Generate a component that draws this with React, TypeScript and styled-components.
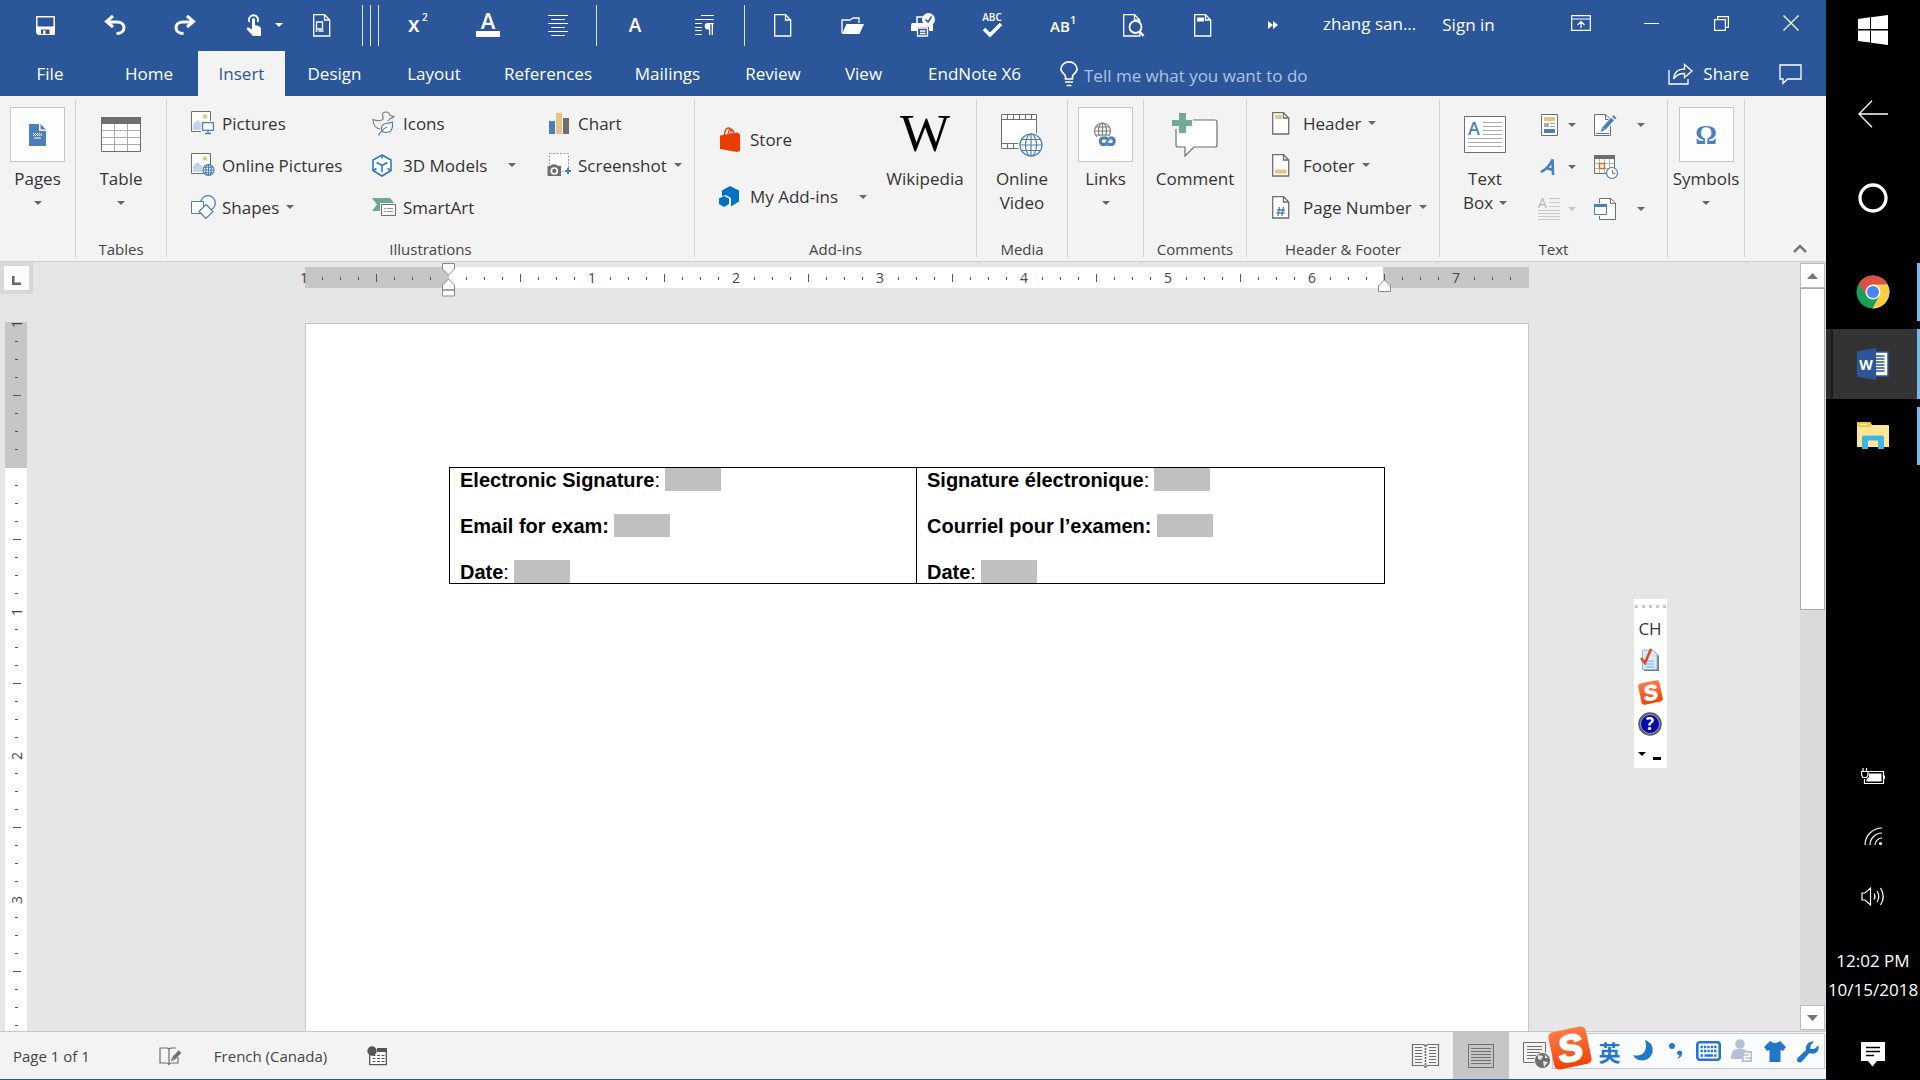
import React from "react";
import styled, { createGlobalStyle, css } from "styled-components";

const UI = `"Open Sans", "Noto Sans", "Noto Sans CJK SC", sans-serif`;
const BLUE = "#2b579a";
const ACCENT = "#4a7fb8";
const GREY = "#6e6e6e";
const SAND = "#eac282";

const GlobalStyle = createGlobalStyle`
  *, *::before, *::after { box-sizing: border-box; }
  body { margin: 0; background: #000; font-family: ${UI}; font-size: 17px; color: #333; overflow: hidden; }
  button { font: inherit; color: inherit; background: none; border: 0; padding: 0; margin: 0; cursor: default; }
  svg { display: block; flex: none; overflow: visible; }
`;

/* ---------- shell ---------- */
const Screen = styled.div`
  display: grid;
  grid-template-columns: minmax(0, 1fr) 94px;
  height: 100vh;
`;
const Window = styled.main`
  display: flex;
  flex-direction: column;
  min-width: 0;
  min-height: 0;
  background: #e6e6e6;
  border-bottom: 1px solid ${BLUE};
`;

/* ---------- title bar ---------- */
const TitleBar = styled.header`
  display: flex;
  height: 51px;
  padding-left: 10px;
  background: ${BLUE};
  color: #fff;
`;
const QuickButton = styled.button<{ $w?: number }>`
  display: flex;
  flex: none;
  align-items: center;
  justify-content: center;
  width: ${(p) => p.$w ?? 70}px;
  height: 50px;
`;
const TouchButton = styled(QuickButton)`
  justify-content: flex-end;
  gap: 14px;
  padding-right: 4px;
`;
const Bars = styled.span<{ $w: number }>`
  display: flex;
  flex: none;
  justify-content: center;
  gap: 7px;
  width: ${(p) => p.$w}px;
  padding-top: 5px;
`;
const Bar = styled.i`
  width: 1px;
  height: 41px;
  background: #dfe6f1;
`;
const TitleText = styled.span`
  flex: none;
  line-height: 48px;
  padding-left: 15px;
`;
const SignIn = styled.button`
  flex: none;
  height: 48px;
  padding: 0 26px;
`;
const WindowControls = styled.div`
  display: flex;
  margin-left: auto;
`;
const ControlButton = styled(QuickButton)`
  height: 46px;
`;

/* ---------- tabs ---------- */
const TabBar = styled.nav`
  display: flex;
  height: 45px;
  background: ${BLUE};
  color: #fff;
`;
const Tab = styled.button<{ $w: number; $active?: boolean }>`
  flex: none;
  width: ${(p) => p.$w}px;
  ${(p) => p.$active && css`background: #f3f3f3; color: ${BLUE};`}
`;
const TellMe = styled.label`
  display: flex;
  flex: 1;
  align-items: center;
  gap: 6px;
  padding-left: 15px;
`;
const TellInput = styled.input`
  width: 260px;
  padding: 3px 0 0;
  border: 0;
  background: none;
  outline: 0;
  font: inherit;
  color: #fff;
  &::placeholder { color: #b1c3e0; opacity: 1; }
`;
const ShareButton = styled.button`
  display: flex;
  align-items: center;
  gap: 10px;
  padding-right: 30px;
`;
const NotesButton = styled.button`
  padding-right: 24px;
`;

/* ---------- ribbon ---------- */
const Ribbon = styled.section`
  display: flex;
  padding: 4px 0;
  background: #f3f3f3;
  border-bottom: 1px solid #cfcfcf;
`;
const GroupBox = styled.div<{ $w: number }>`
  display: flex;
  flex: none;
  flex-direction: column;
  width: ${(p) => p.$w}px;
  height: 157px;
  border-right: 1px solid #d0d0d0;
`;
const GroupBody = styled.div<{ $pad?: number }>`
  display: flex;
  flex: 1;
  padding: 2px 0 0 ${(p) => p.$pad ?? 0}px;
`;
const GroupLabel = styled.span`
  line-height: 16px;
  font-size: 15px;
  text-align: center;
  color: #444;
`;
const Big = styled.button<{ $w?: number }>`
  display: flex;
  flex-direction: column;
  align-items: center;
  ${(p) => (p.$w ? `width: ${p.$w}px;` : "flex: 1;")}
  padding-top: 5px;
  line-height: 24px;
`;
const Slot = styled.span<{ $boxed?: boolean }>`
  display: flex;
  align-items: center;
  justify-content: center;
  width: 55px;
  height: 55px;
  margin-bottom: 5px;
  ${(p) => p.$boxed && css`background: #fdfdfd; border: 1px solid #c6c6c6;`}
`;
const CaretLine = styled.span`
  display: flex;
  align-items: center;
  gap: 6px;
  height: 24px;
`;
const Columns = styled.div<{ $cols: string }>`
  display: grid;
  flex: 1;
  grid-template-columns: ${(p) => p.$cols};
  grid-template-rows: repeat(3, 42px);
  grid-auto-flow: column;
`;
const AddinStack = styled.div`
  display: grid;
  width: 161px;
  padding-top: 9px;
  grid-template-rows: 57px 57px;
  align-content: start;
`;
const Small = styled.button<{ $gap?: number }>`
  display: flex;
  align-items: center;
  gap: 7px;
  white-space: nowrap;
  & > svg:last-child { margin-left: ${(p) => p.$gap ?? 0}px; }
`;
const SmallSlot = styled.span<{ $center?: boolean }>`
  display: flex;
  justify-content: ${(p) => (p.$center ? "center" : "flex-start")};
  width: 24px;
`;
const Collapse = styled.button`
  align-self: flex-end;
  margin-left: auto;
  padding: 0 19px 4px 0;
`;

/* ---------- workspace ---------- */
const Workspace = styled.section`
  display: grid;
  flex: 1;
  min-height: 0;
  grid-template-columns: 34px minmax(0, 1fr) 26px;
  grid-template-rows: 32px minmax(0, 1fr);
  border-bottom: 1px solid #c6c6c6;
`;
const TabSelector = styled.button`
  display: flex;
  align-items: center;
  justify-content: center;
  width: 33px;
  height: 32px;
  padding-top: 5px;
  background: #fcfcfc;
  border: 4px solid #d8d8d8;
`;
const RulerRow = styled.div`
  display: flex;
  justify-content: center;
  padding-top: 5px;
`;
const HRuler = styled.div`
  position: relative;
  display: flex;
  flex: none;
  width: 1224px;
  height: 21px;
  background: linear-gradient(to right, #c6c6c6 144px, #fff 144px 1078px, #c6c6c6 1078px);
`;
const HMarks = styled.div`
  display: flex;
  flex: none;
  margin-left: -10px;
`;
const mark = css`
  display: flex;
  flex: none;
  align-items: center;
  justify-content: center;
  font-size: 14px;
  line-height: 18px;
  color: #444;
`;
const HMark = styled.span`
  ${mark}
  width: 18px;
  height: 22px;
`;
const VMark = styled.span`
  ${mark}
  width: 24px;
  height: 18px;
  writing-mode: vertical-rl;
  transform: rotate(180deg);
`;
const HTick = styled.i<{ $long: boolean }>`
  width: 1px;
  height: ${(p) => (p.$long ? 8 : 3)}px;
  background: #555;
`;
const VTick = styled.i<{ $long: boolean }>`
  width: ${(p) => (p.$long ? 8 : 3)}px;
  height: 1px;
  background: #555;
`;
const Indent = styled.svg<{ $x: number; $y: number }>`
  position: absolute;
  left: ${(p) => p.$x}px;
  top: ${(p) => p.$y}px;
`;
const VRulerColumn = styled.div`
  min-height: 0;
  padding: 28px 0 0 5px;
`;
const VRuler = styled.div`
  width: 22px;
  height: 100%;
  overflow: hidden;
  background: linear-gradient(to bottom, #c6c6c6 146px, #fff 146px);
`;
const VMarks = styled.div`
  display: flex;
  flex-direction: column;
  margin-top: -7px;
`;
const Canvas = styled.div`
  display: flex;
  justify-content: center;
  min-height: 0;
  padding-top: 29px;
  overflow: hidden;
`;
const Paper = styled.article`
  flex: none;
  width: 1224px;
  padding: 143px 143px 0 143px;
  background: #fff;
  border: 1px solid #c6c6c6;
  border-bottom: 0;
`;
const DocTable = styled.table`
  width: 100%;
  border-collapse: collapse;
  table-layout: fixed;
  font-family: "Liberation Sans", Arial, sans-serif;
  font-size: 20px;
  line-height: 23px;
  color: #000;
`;
const DocCell = styled.td`
  padding: 0 10px;
  border: 1px solid #000;
  vertical-align: top;
  &:first-child { width: 467px; }
`;
const FieldLine = styled.label`
  display: flex;
  align-items: center;
  gap: 5px;
  height: 23px;
  & + & { margin-top: 23px; }
`;
const FieldText = styled.span`
  padding-top: 2px;
`;
const FieldBox = styled.input`
  width: 56px;
  height: 23px;
  padding: 0;
  border: 0;
  background: #c0c0c0;
  font: inherit;
`;
const ScrollBar = styled.div`
  display: flex;
  flex-direction: column;
  grid-column: 3;
  grid-row: 1 / 3;
  padding: 1px 1px 1px 0;
  background: #dadada;
`;
const ScrollButton = styled.button`
  display: flex;
  align-items: center;
  justify-content: center;
  width: 25px;
  height: 25px;
  background: #fff;
  border: 1px solid #bdbdbd;
`;
const Thumb = styled.div`
  flex: 0 0 42%;
  background: #fff;
  border: 1px solid #ababab;
`;
const Spacer = styled.span`
  flex: 1;
`;

/* ---------- status bar ---------- */
const StatusBar = styled.footer`
  display: flex;
  flex: none;
  align-items: center;
  height: 47px;
  padding-left: 13px;
  background: #f3f3f3;
  font-size: 15px;
  color: #444;
`;
const StatusButton = styled.button<{ $ml?: number }>`
  margin-left: ${(p) => p.$ml ?? 0}px;
  flex: none;
`;
const ViewButton = styled.button<{ $on?: boolean }>`
  display: flex;
  align-items: center;
  justify-content: center;
  width: 56px;
  height: 47px;
  background: ${(p) => (p.$on ? "#c6c6c6" : "transparent")};
`;
const ViewGroup = styled.div`
  display: flex;
  margin-left: auto;
  padding-right: 261px;
`;

/* ---------- floating input-method bars ---------- */
const ImeBar = styled.aside`
  position: absolute;
  right: 95px;
  bottom: 11px;
  display: flex;
  align-items: center;
  height: 36px;
  padding-left: 40px;
  background: #fbfcfe;
  border: 1px solid #b9cbdc;
  color: #2277c9;
`;
const ImeLogo = styled.span`
  position: absolute;
  left: -5px;
  top: -8px;
`;
const ImeButton = styled.button`
  display: flex;
  align-items: center;
  justify-content: center;
  width: 33px;
  height: 34px;
  font: bold 22px/34px "Noto Sans CJK SC", sans-serif;
`;
const LanguageBar = styled.aside`
  position: absolute;
  right: 253px;
  top: 599px;
  display: flex;
  flex-direction: column;
  align-items: center;
  width: 33px;
  height: 169px;
  padding-right: 1px;
  background: #fff;
  color: #333;
`;
const Grip = styled.i`
  width: 31px;
  height: 3px;
  margin: 6px 0;
  background: repeating-linear-gradient(to right, #c9c9c9 0 3px, #fff 3px 7px);
`;
const LangButton = styled.button<{ $h: number }>`
  display: flex;
  align-items: center;
  justify-content: center;
  height: ${(p) => p.$h}px;
`;

/* ---------- system sidebar ---------- */
const Sidebar = styled.aside`
  display: flex;
  flex-direction: column;
  min-width: 0;
  background: #000;
  color: #fff;
`;
const SideButton = styled.button<{ $h: number }>`
  display: flex;
  flex: none;
  align-items: center;
  justify-content: center;
  height: ${(p) => p.$h}px;
`;
const Task = styled.button<{ $active?: boolean }>`
  display: flex;
  flex: none;
  align-items: center;
  justify-content: center;
  height: ${(p) => (p.$active ? 70 : 58)}px;
  margin-bottom: 8px;
  padding-left: 3px;
  border-right: 3px solid #76b9ed;
  ${(p) => p.$active && css`background: linear-gradient(to right, #2b2b2b 5px, #1c1c1c 5px 7px, #333 7px);`}
`;
const Clock = styled.time`
  display: flex;
  flex-direction: column;
  align-items: center;
  margin: 20px 0 24px;
  line-height: 29px;
  white-space: nowrap;
`;

/* ---------- icons ---------- */
type P = { children: React.ReactNode; w: number; h: number };
const Svg = ({ children, w, h }: P) => (
  <svg width={w} height={h} viewBox={`0 0 ${w} ${h}`} fill="none" aria-hidden="true">{children}</svg>
);
const Caret = ({ color = "#666", w = 8 }: { color?: string; w?: number }) => (
  <Svg w={w} h={w / 2}><path d={`M0 0H${w}L${w / 2} ${w / 2}Z`} fill={color} /></Svg>
);

const SaveIcon = () => (
  <Svg w={19} h={19}>
    <path d="M1 0H18Q19 0 19 1V18Q19 19 18 19H2L0 17V1Q0 0 1 0Z" fill="#fff" />
    <path d="M1.500 1.500H17.500V9.500L16.500 10.500H2.500L1.500 9.500Z" fill={BLUE} />
    <path d="M5 13.500H13.500V18H5Z" fill={BLUE} />
    <path d="M7 14.500H9.500V18H7Z" fill="#fff" />
  </Svg>
);
const UndoIcon = ({ flip }: { flip?: boolean }) => (
  <Svg w={22} h={20}>
    <g transform={flip ? "translate(22 0) scale(-1 1)" : undefined} stroke="#fff" strokeWidth="3">
      <path d="M3 7H13C18 7 20 10 20 12.500C20 16 17 18.500 12.500 18.500" />
      <path d="M9 1L2.500 6.500L9 12" />
    </g>
  </Svg>
);
const TouchIcon = () => (
  <Svg w={15} h={22}>
    <path d="M3.600 8A4.500 4.500 0 1 1 11.400 8" stroke="#fff" strokeWidth="1.800" />
    <path d="M6 5.500Q6 4 7.500 4T9 5.500V11L13.500 12.500Q15 13 15 15V22H7L1 15.500Q0 14 1.500 13.500Q3 13 6 15.500Z" fill="#fff" />
  </Svg>
);
const DocOutline = ({ children, w = 18, h = 23, stroke = "#fff", fill = "none" }: { children?: React.ReactNode; w?: number; h?: number; stroke?: string; fill?: string }) => (
  <Svg w={w} h={h}>
    <path d="M.7 .7H11.500L16.700 6V22H.7Z" stroke={stroke} strokeWidth="1.300" fill={fill} />
    <path d="M11.500 .7V6H16.700" stroke={stroke} strokeWidth="1.300" />
    {children}
  </Svg>
);
const FrameDocIcon = () => (
  <DocOutline><path d="M3.500 8H9.500V15H3.500ZM2.500 17H4.500M5.500 17H10.500" stroke="#fff" strokeWidth="1.300" /></DocOutline>
);
const GlyphIcon = ({ children }: { children: React.ReactNode }) => (
  <svg width="26" height="26" viewBox="0 0 26 26" fill="#fff" fontFamily='"Open Sans", sans-serif' aria-hidden="true">{children}</svg>
);
const SuperIcon = () => (
  <GlyphIcon><text x="3" y="20" fontSize="21" fontWeight="600">x</text><text x="17" y="9" fontSize="10" fontWeight="600">2</text></GlyphIcon>
);
const FontColorIcon = () => (
  <GlyphIcon><text x="13" y="17" fontSize="22" fontWeight="600" textAnchor="middle">A</text><path d="M1 19H25V25H1Z" /></GlyphIcon>
);
const CenterIcon = () => (
  <Svg w={20} h={21}><path d="M0 .5H20M3 4.500H17M0 8.500H20M3 12.500H17M0 16.500H20M3 20.500H17" stroke="#fff" /></Svg>
);
const LetterIcon = () => (
  <GlyphIcon><text x="13" y="20" fontSize="19" fontWeight="600" textAnchor="middle">A</text></GlyphIcon>
);
const ParaIcon = () => (
  <Svg w={20} h={20}>
    <path d="M6 .5H19M0 4.500H19M0 8.500H7M0 12.500H7M0 15.500H7M0 19.500H7" stroke="#fff" />
    <path d="M19 8H13A3.300 3.300 0 0 0 13 14.600H14V20H15.300V9.300H16.700V20H18V9.300H19Z" fill="#fff" />
  </Svg>
);
const FolderIcon = () => (
  <Svg w={24} h={20}>
    <path d="M1 18V5H9L12 3H18V8" stroke="#fff" strokeWidth="1.300" />
    <path d="M5.500 9H23L18.500 19H1Z" fill="#fff" />
  </Svg>
);
const PrintIcon = () => (
  <Svg w={24} h={24}>
    <path d="M6 10V4H12" stroke="#fff" strokeWidth="1.500" />
    <path d="M2 10H20Q22 10 22 12V18H18V14H6V18H0V12Q0 10 2 10Z" fill="#fff" />
    <path d="M6.500 15H16.500V23H6.500ZM9 18H14.500M9 20.500H14.500" stroke="#fff" strokeWidth="1.300" />
    <circle cx="17.500" cy="6.500" r="6.500" fill="#fff" />
    <path d="M14.500 6.500L17 9L20.500 3.500" stroke={BLUE} strokeWidth="1.600" />
  </Svg>
);
const SpellIcon = () => (
  <GlyphIcon>
    <text x="12" y="9" fontSize="10" fontWeight="600" textAnchor="middle">ABC</text>
    <path d="M4 17L10 23L21 12" stroke="#fff" strokeWidth="3.500" fill="none" />
  </GlyphIcon>
);
const FootnoteIcon = () => (
  <GlyphIcon><text x="0" y="20" fontSize="15" fontWeight="600">AB</text><text x="20" y="12" fontSize="11" fontWeight="600">1</text></GlyphIcon>
);
const PreviewIcon = () => (
  <DocOutline w={21}>
    <circle cx="12.500" cy="13" r="6" fill={BLUE} stroke="#fff" strokeWidth="1.800" />
    <path d="M16.500 17.500L20.500 22" stroke="#fff" strokeWidth="2.600" />
  </DocOutline>
);
const CaptionDocIcon = () => <DocOutline><path d="M3 3.500H10V7.500H3Z" fill="#fff" /></DocOutline>;
const MoreIcon = () => <Svg w={10} h={8}><path d="M0 0L5 4L0 8ZM5 0L10 4L5 8Z" fill="#fff" /></Svg>;
const BulbIcon = () => (
  <Svg w={18} h={26}>
    <path d="M5.500 18V15.500C5.500 13 1 12 1 8.300A8 7.500 0 0 1 17 8.300C17 12 12.500 13 12.500 15.500V18Z" stroke="#fff" strokeWidth="1.700" />
    <path d="M5 21H13M6.500 24.500H11.500" stroke="#fff" strokeWidth="1.700" />
  </Svg>
);
const ShareIcon = () => (
  <Svg w={25} h={22}>
    <path d="M1 7V21H20V16" stroke="#fff" strokeWidth="1.300" />
    <path d="M5.500 16C6 9 10 6 16.500 6V1.500L24 8L16.500 14.500V10.500C11 10.500 8 12 5.500 16Z" stroke="#fff" strokeWidth="1.300" />
  </Svg>
);
const NoteIcon = () => (
  <Svg w={23} h={20}><path d="M1 1H22V15H8.500L4 19.500V15H1Z" stroke="#fff" strokeWidth="1.300" /></Svg>
);

const PagesIcon = () => (
  <Svg w={17} h={22}>
    <path d="M0 0H10V7H17V22H0Z" fill={ACCENT} />
    <path d="M11.500 0L17 5.500H11.500Z" fill={ACCENT} />
    <path d="M4 9.500H13M5 10.500H13M4 11.500H13" stroke="#fff" strokeDasharray="1 1" />
    <path d="M5 14H12" stroke="#fff" />
  </Svg>
);
const TableIcon = () => (
  <Svg w={40} h={35}>
    <path d="M.5 .5H39.500V34.500H.5Z" fill="#fff" stroke={GREY} />
    <path d="M13.500 7V34M26.500 7V34M1 13.500H39M1 20.500H39M1 27.500H39" stroke="#ababab" />
    <path d="M0 0H40V7H0Z" fill={GREY} />
  </Svg>
);
const PictureBase = () => (
  <>
    <path d="M.5 .5H19.500V20.500H.5Z" fill="#fff" stroke={GREY} />
    <circle cx="14" cy="5.500" r="2.300" fill={SAND} />
    <path d="M2 19V13L6.500 9L11 13V19Z" fill="#c3d5ea" />
  </>
);
const GlobeShape = ({ x, y, r, c = ACCENT, bg = "#fff" }: { x: number; y: number; r: number; c?: string; bg?: string }) => (
  <g stroke={c} strokeWidth="1.200" transform={`translate(${x} ${y})`}>
    <circle r={r} fill={bg} />
    <ellipse rx={r / 2} ry={r} />
    <path d={`M0 ${-r}V${r}M${-r} 0H${r}M${-r * 0.85} ${-r / 2}H${r * 0.85}M${-r * 0.85} ${r / 2}H${r * 0.85}`} />
  </g>
);
const PicturesIcon = () => (
  <Svg w={24} h={24}>
    <PictureBase />
    <path d="M10 10H24V22H10Z" fill="#f3f3f3" />
    <path d="M11.600 11.600H22.400V19.400H11.600ZM17 19V22.500M14 22.500H20" fill="#fff" stroke={ACCENT} strokeWidth="1.300" />
  </Svg>
);
const OnlinePicturesIcon = () => <Svg w={24} h={24}><PictureBase /><GlobeShape x={17.500} y={17} r={5.500} /></Svg>;
const ShapesIcon = () => (
  <Svg w={25} h={25}>
    <circle cx="17" cy="8" r="7.300" fill="#fff" stroke={ACCENT} strokeWidth="1.300" />
    <path d="M.5 6.500H12.500V18.500H.5Z" fill="#fff" stroke={ACCENT} />
    <path d="M15 9.500L22 16.500L15 23.500L8 16.500Z" fill="#fff" stroke={ACCENT} strokeWidth="1.200" />
  </Svg>
);
const IconsIcon = () => (
  <Svg w={24} h={25}>
    <path d="M8 18C4 17.500 1 14 1 8.500Q6 10.500 10 9Q12 7.500 10.500 4.500Q10.500 1 14 1Q17.500 1 18 4.500L22 5.500Q20 7.500 18 7.500Q17 9.500 15.500 10" stroke="#808080" strokeWidth="1.200" />
    <path d="M20.500 11C21 17 20 21.500 13.500 21.500C7.500 21 8.500 13.500 14 12.500Q18 12 20.500 11ZM6.500 24.500Q9 19 15 16" fill="#fff" stroke={ACCENT} strokeWidth="1.200" />
  </Svg>
);
const CubeIcon = () => (
  <Svg w={20} h={23}>
    <path d="M10 1L19 6V16.500L10 22L1 16.500V6ZM4.500 8.500L10 11.500L15.500 8.500M10 11.500V18" fill="#fff" stroke="#1c78c8" strokeWidth="1.500" />
    <path d="M10 1V4.500M1 16.500L4.500 14.500M19 16.500L15.500 14.500" stroke="#1c78c8" strokeWidth="1.500" />
  </Svg>
);
const SmartArtIcon = () => (
  <Svg w={24} h={18}>
    <path d="M0 0H18L22 5H8V13H0L5 6.500Z" fill="#6ba792" />
    <path d="M9.500 6.500H23.500V17.500H9.500Z" fill="#fff" stroke={GREY} />
    <path d="M12 10.500H14M15 10.500H21M12 13.500H14M15 13.500H21" stroke="#999" />
  </Svg>
);
const ChartIcon = () => (
  <Svg w={22} h={21}><path d="M2 8H8V21H2Z" fill={ACCENT} /><path d="M9 0H15V21H9Z" fill={SAND} /><path d="M16 5H22V21H16Z" fill={GREY} /></Svg>
);
const ScreenshotIcon = () => (
  <Svg w={24} h={24}>
    <path d="M2.500 .5H21.500V18.500H2.500Z" fill="#fff" stroke="#999" strokeDasharray="2 1.500" />
    <path d="M0 12.500H3L5 11H9L11 12.500H14.500V23.500H0Z" fill={GREY} stroke="#f3f3f3" />
    <circle cx="7.300" cy="18" r="3" stroke="#fff" strokeWidth="1.700" />
    <path d="M21 15V21M18 18H24" stroke={ACCENT} strokeWidth="2" />
  </Svg>
);
const StoreIcon = () => (
  <Svg w={22} h={25}>
    <path d="M5.500 8Q6 1 9.500 1T12 7M9 7.500Q9.500 2 12 2.500T15 6" stroke="#eb3c00" strokeWidth="1.300" />
    <path d="M1 8.500L18.500 5.500L21 7.500V24L18.500 25L1 22Z" fill="#eb3c00" />
  </Svg>
);
const AddinsIcon = () => (
  <Svg w={20} h={21}>
    <path d="M11 0L20 4.500V15.500L12 20.500V12L7 9L3 10V4.500Z" fill="#0072c6" />
    <path d="M5 10L10 12.500V18L5 21L0 18V12.500Z" fill="#0072c6" />
  </Svg>
);
const WikiIcon = () => (
  <svg width="54" height="38" viewBox="0 0 54 38" fill="#000" fontFamily='"Liberation Serif", serif' fontSize="53" aria-hidden="true">
    <text x="27" y="35" textAnchor="middle">W</text>
  </svg>
);
const VideoIcon = () => (
  <Svg w={42} h={44}>
    <path d="M.5 1.500H35.500V35.500H.5Z" fill="#fff" stroke={GREY} />
    <path d="M1 6.500H35M1 30.500H35M6.500 2V6M12.500 2V6M18.500 2V6M24.500 2V6M30.500 2V6M6.500 31V35M12.500 31V35M18.500 31V35" stroke={GREY} />
    <circle cx="30" cy="32" r="13" fill="#f3f3f3" />
    <GlobeShape x={30} y={32} r={11} />
  </Svg>
);
const LinksIcon = () => (
  <Svg w={23} h={25}>
    <GlobeShape x={8.500} y={9} r={8} c="#808080" bg="#fdfdfd" />
    <path d="M3 14H23V26H3Z" fill="#fdfdfd" />
    <g stroke={ACCENT} strokeWidth="3">
      <path d="M12 22.500H8.500A3.500 3.500 0 0 1 8.500 16H11.500Q14 16 14 19.500" />
      <path d="M15 16H18A3.500 3.500 0 0 1 18 22.500H15Q12.500 22.500 12.500 19.500" />
    </g>
  </Svg>
);
const CommentIcon = () => (
  <Svg w={46} h={44}>
    <path d="M6 7H43Q45 7 45 9V32Q45 34 43 34H22L13 43V34H6Q4 34 4 32V9Q4 7 6 7Z" fill="#fff" stroke={GREY} strokeWidth="1.200" />
    <path d="M5 0H15V5H21V16H15V22H5V16H0V5H5Z" fill="#f3f3f3" />
    <path d="M7 0H14V7H20V13H14V20H7V13H0V7H7Z" fill="#74a995" />
  </Svg>
);
const PageIcon = ({ children }: { children?: React.ReactNode }) => <DocOutline stroke={GREY} fill="#fff">{children}</DocOutline>;
const HeaderIcon = () => <PageIcon><path d="M3 3H10V7H3Z" fill={SAND} /></PageIcon>;
const FooterIcon = () => <PageIcon><path d="M3 15.500H14.500V19.500H3Z" fill={SAND} /></PageIcon>;
const NumberIcon = () => (
  <PageIcon><path d="M7.500 11L6 20M11.500 11L10 20M5 14H13M4.500 17H12.500" stroke={ACCENT} strokeWidth="1.300" /></PageIcon>
);
const TextBoxIcon = () => (
  <Svg w={42} h={37}>
    <path d="M.5 .5H41.500V36.500H.5Z" fill="#fff" stroke={GREY} />
    <text x="4" y="19" fontSize="18" fontWeight="600" fontFamily='"Open Sans", sans-serif' fill={ACCENT}>A</text>
    <path d="M19 6.500H38M19 10.500H38M19 14.500H38M19 18.500H38M4 22.500H38M4 26.500H38M4 30.500H38" stroke="#ababab" />
  </Svg>
);
const QuickPartsIcon = () => (
  <Svg w={17} h={22}>
    <path d="M.5 .5H16.500V21.500H.5Z" fill="#fff" stroke={GREY} />
    <path d="M3 3H14V7H3Z" fill={SAND} /><path d="M3 9H8V13H3Z" fill="#ababab" />
    <path d="M9 9.500H14M9 12.500H14" stroke="#ababab" /><path d="M3 15H14V19H3Z" fill={ACCENT} />
  </Svg>
);
const WordArtIcon = () => (
  <Svg w={20} h={20}>
    <path d="M2 15Q10 11 13.500 2.500L14 18M7 11L14 13" stroke={ACCENT} strokeWidth="2.600" />
  </Svg>
);
const DropCapIcon = () => (
  <Svg w={22} h={22}>
    <text x="0" y="10" fontSize="14" fontFamily='"Open Sans", sans-serif' fill="#b5b5b5">A</text>
    <path d="M11 .5H22M11 4.500H22M11 8.500H22M0 12.500H22M0 15.500H22M0 18.500H22M0 21.500H22" stroke="#c8c8c8" />
  </Svg>
);
const SignatureIcon = () => (
  <Svg w={24} h={24}>
    <path d="M1.500 1.500H12.500L17.500 6V22.500H1.500Z" fill="#fff" stroke={GREY} />
    <path d="M12.500 1.500V6.500H17" stroke={GREY} />
    <path d="M20 6L11 15.500" stroke="#fff" strokeWidth="6" />
    <path d="M19.500 6L11 15.500" stroke={ACCENT} strokeWidth="4" /><path d="M7.500 19L9.500 14L12 17Z" fill={ACCENT} />
    <path d="M3 20.500H16" stroke={ACCENT} /><path d="M20.500 5L22 3.500" stroke={ACCENT} strokeWidth="4" />
  </Svg>
);
const DateIcon = () => (
  <Svg w={25} h={25}>
    <path d="M1.500 1.500H21.500V18.500H1.500Z" fill="#fff" stroke={GREY} />
    <path d="M6.500 4V18M11.500 4V18M16.500 4V18M2 8.500H21M2 13.500H21" stroke="#b5b5b5" />
    <path d="M1 0H22V4H1Z" fill={GREY} /><path d="M6.500 8.500H11.500V13.500H6.500Z" fill="#fff" stroke="#e06c1c" strokeWidth="1.500" />
    <circle cx="19" cy="18" r="5.500" fill="#fff" stroke={ACCENT} strokeWidth="1.200" />
    <path d="M19.500 15V18.500H22" stroke={GREY} />
  </Svg>
);
const ObjectIcon = () => (
  <Svg w={24} h={22}>
    <path d="M6.500 .5H17.500L22.500 5V21.500H6.500Z" fill="#fff" stroke={GREY} />
    <path d="M17.500 .5V5.500H22" stroke={GREY} />
    <path d="M0 5H15V18H0Z" fill="#f3f3f3" />
    <path d="M1.500 7.500H13.500V16.500H1.500Z" fill="#fff" stroke={ACCENT} /><path d="M1 6H14V9H1Z" fill={ACCENT} />
  </Svg>
);
const OmegaIcon = () => (
  <svg width="24" height="24" viewBox="0 0 24 24" aria-hidden="true">
    <text x="12" y="21" fontSize="27" fontWeight="700" fontFamily='"Liberation Serif", serif' textAnchor="middle" fill={ACCENT}>Ω</text>
  </svg>
);

const ProofIcon = () => (
  <Svg w={23} h={18}>
    <path d="M10 2Q9 1 7 1H1V16H7Q9 16 10 17.500Q11 16 13 16H19V10M10 2V17M10 2Q11 1 13 1H17" stroke={GREY} strokeWidth="1.200" />
    <path d="M21 4.500L14.500 11.500" stroke={GREY} strokeWidth="3.600" /><path d="M12 14L13 10.500L15.500 13Z" fill={GREY} />
  </Svg>
);
const MacroIcon = () => (
  <Svg w={21} h={20}>
    <path d="M2.700 9V18.700H19.300V4" fill="#fff" stroke="#555" strokeWidth="1.300" />
    <path d="M10 2H20V6H10Z" fill="#555" /><circle cx="5" cy="5" r="4.700" fill="#555" />
    <path d="M5.500 9.500H8.500M10 9.500H13M14.500 9.500H17.500M5.500 12.500H8.500M10 12.500H13M14.500 12.500H17.500M5.500 15.500H8.500M10 15.500H13M14.500 15.500H17.500" stroke="#555" />
  </Svg>
);
const ReadIcon = () => (
  <Svg w={27} h={24}>
    <path d="M.5 .5H11Q13 .5 13.500 2.500Q14 .5 16 .5H26.500V21.500H16Q14 21.500 13.500 23.500Q13 21.500 11 21.500H.5Z" stroke={GREY} strokeWidth="1.200" />
    <path d="M13.500 1V24" stroke={GREY} strokeWidth="1.600" strokeDasharray="2 1" />
    <path d="M3 3.500H10M3 6.500H10M3 9.500H10M3 12.500H10M3 15.500H10M3 18.500H10M17 3.500H24M17 6.500H24M17 9.500H24M17 12.500H24M17 15.500H24M17 18.500H24" stroke={GREY} />
  </Svg>
);
const PrintLayoutIcon = () => (
  <Svg w={26} h={24}>
    <path d="M.5 .5H25.500V23.500H.5Z" stroke={GREY} />
    <path d="M3 4.500H23M3 7.500H23M3 10.500H23M3 13.500H23M3 16.500H23M3 19.500H23" stroke={GREY} />
  </Svg>
);
const WebIcon = () => (
  <Svg w={28} h={27}>
    <path d="M.5 .5H22.500V20.500H.5Z" stroke={GREY} />
    <path d="M4 4.500H19M4 7.500H19M4 10.500H17M4 13.500H13M4 16.500H12" stroke={GREY} />
    <circle cx="19.500" cy="18.500" r="8" fill={GREY} stroke="#f3f3f3" />
    <path d="M15 13L20 14L18 18L15 17ZM20 19L25 20L21 25ZM22 12.500L25 16L22 16Z" fill="#e8e8e8" />
  </Svg>
);
const SogouIcon = ({ size }: { size: number }) => (
  <svg width={size} height={size} viewBox="0 0 44 44" aria-hidden="true">
    <defs>
      <linearGradient id="sogou" x1="0" y1="0" x2="0" y2="1"><stop offset="0" stopColor="#ff7b47" /><stop offset="1" stopColor="#f04405" /></linearGradient>
    </defs>
    <g transform="rotate(-12 22 22)">
      <rect x="3" y="3" width="38" height="38" rx="5" fill="url(#sogou)" />
      <text x="22" y="35" fontSize="37" fontWeight="700" fontStyle="italic" fontFamily='"Liberation Sans", sans-serif' textAnchor="middle" fill="#fff" stroke="#fff" strokeWidth="2">S</text>
    </g>
  </svg>
);
const MoonIcon = () => <Svg w={20} h={22}><path d="M12 0Q22 4 19 14Q15 22 6 20Q2 19 0 15Q8 17 12 11Q14 6 12 0Z" fill="#2277c9" /></Svg>;
const PunctIcon = () => <Svg w={16} h={18}><circle cx="4" cy="4" r="3" fill="#2277c9" /><path d="M9 10Q12 7 14 10Q15 15 9 17Q12 14 11 13Q9 13 9 10Z" fill="#2277c9" /></Svg>;
const KeyboardIcon = () => (
  <Svg w={25} h={20}>
    <rect x="1.300" y="1.300" width="22.400" height="17.400" rx="2.500" stroke="#2277c9" strokeWidth="2.600" fill="#fff" />
    <path d="M4.500 6H20.500M4.500 10H20.500" stroke="#2277c9" strokeWidth="2.400" strokeDasharray="2.400 1" /><path d="M4.500 14.500H7M8.500 14.500H17M18 14.500H20.500" stroke="#2277c9" strokeWidth="2.400" />
  </Svg>
);
const PersonIcon = () => (
  <Svg w={22} h={24}>
    <circle cx="9" cy="5" r="4.800" fill="#b4c0d8" /><path d="M0 20Q0 10 6 10H12Q17 10 18 20Z" fill="#b4c0d8" />
    <path d="M11 12H21V23H11Z" fill="#b4c0d8" /><path d="M13 14.500H18.500V17.500H13.500V20.500H19" stroke="#fff" strokeWidth="1.700" />
  </Svg>
);
const ShirtIcon = () => <Svg w={22} h={21}><path d="M6 0Q11 4 16 0L22 6L19 10L16.500 9V21H5.500V9L3 10L0 6Z" fill="#2277c9" /></Svg>;
const WrenchIcon = () => (
  <Svg w={22} h={21}><path d="M1 21Q-1 19 1 16.500L9 9Q8 4 12 1.500Q14 0 17 .5L13.500 4.500V8H17L21.500 4.500Q22.500 10 18.500 12Q16 13.500 12.500 12L5 20.500Q3 22 1 21Z" fill="#2277c9" /></Svg>
);
const CheckDocIcon = () => (
  <Svg w={20} h={24}>
    <path d="M4 3H14L19 8V23H4Z" fill="#777" /><path d="M2.500 2H13L17 6.500V21.500H2.500Z" fill="#d6eafb" stroke="#8fb9df" />
    <path d="M6 13H14M6 16H14M6 19H14" stroke="#7fb2e6" /><path d="M1 10L5 15L11 1" stroke="#e8401a" strokeWidth="2.500" />
  </Svg>
);
const HelpIcon = () => (
  <Svg w={24} h={24}>
    <circle cx="12" cy="12" r="10.500" fill="#0a0aa8" stroke="#555b66" strokeWidth="2.500" /><circle cx="12" cy="12" r="9.500" stroke="#aab0d8" strokeWidth=".8" />
    <text x="12" y="18" fontSize="17" fontWeight="700" fontFamily='"Open Sans", sans-serif' textAnchor="middle" fill="#fff">?</text>
  </Svg>
);

const WindowsIcon = () => (
  <Svg w={30} h={30}><path d="M0 4L12 2.300V14H0ZM13 2.200L30 0V14H13ZM0 15.500H12V27.500L0 26ZM13 15.500H30V30L13 27.700Z" fill="#fff" /></Svg>
);
const BackIcon = () => <Svg w={30} h={28}><path d="M30 14H1M14 .7L1 14L14 27.300" stroke="#fff" strokeWidth="1.300" /></Svg>;
const CircleIcon = () => <Svg w={30} h={30}><circle cx="15" cy="15" r="13" stroke="#fff" strokeWidth="3.300" /></Svg>;
const ChromeIcon = () => (
  <Svg w={34} h={34}>
    <circle cx="17" cy="17" r="16.500" fill="#1a9f5b" />
    <path d="M17 17L3 8.500A16.500 16.500 0 0 1 31.800 9.500H17Z" fill="#dd5044" />
    <path d="M17 9.500H31.700A16.500 16.500 0 0 1 16.500 33.500L23.500 20.500Z" fill="#ffce43" />
    <path d="M3 8.500L10.500 21L17 17V9.500Z" fill="#dd5044" />
    <circle cx="17" cy="17" r="7.600" fill="#f3f3f3" /><circle cx="17" cy="17" r="6" fill="#4a86f0" />
  </Svg>
);
const WordIcon = () => (
  <Svg w={32} h={32}>
    <path d="M17 4H31V28H17Z" fill="#fff" stroke="#2b579a" strokeWidth="1.500" />
    <path d="M19 8H27.500M19 11H27.500M19 14H27.500M19 17H27.500M19 20H27.500M19 23H27.500" stroke="#2b579a" strokeWidth="1.500" />
    <path d="M0 3.500L19 0V32L0 28.500Z" fill="#2b579a" />
    <text x="9" y="21.500" fontSize="14" fontWeight="700" fontFamily='"Open Sans", sans-serif' textAnchor="middle" fill="#fff">W</text>
  </Svg>
);
const ExplorerIcon = () => (
  <Svg w={32} h={28}>
    <path d="M0 1Q0 0 1 0H13L15 3H31Q32 3 32 4V25H0Z" fill="#ffe694" /><path d="M0 1Q0 0 1 0H13L15 3L13 5H0Z" fill="#f6c736" /><path d="M3 2.500H10" stroke="#fff" strokeWidth="1.200" />
    <path d="M5 27V15Q5 13.500 6.500 13.500H25.500Q27 13.500 27 15V27H21V18.500H11V27Z" fill="#3db5e6" />
  </Svg>
);
const BatteryIcon = () => (
  <Svg w={24} h={17}>
    <path d="M6 3.500H22.500V15.500H3.500V11" stroke="#fff" strokeWidth="1.200" /><path d="M8 5.500H20.500V13.500H5.500V11L8 9Z" fill="#fff" /><path d="M23 7.500V11" stroke="#fff" strokeWidth="2" />
    <path d="M2 0V3M5.500 0V3M.6 3.500H7V7L5.500 9.500H2L.6 7Z" stroke="#fff" strokeWidth="1.200" fill="#000" />
  </Svg>
);
const WifiIcon = () => (
  <Svg w={18} h={18}><path d="M1 18A17 17 0 0 1 18 1M6 18A12 12 0 0 1 18 6M11 18A7 7 0 0 1 18 11" stroke="#fff" strokeWidth="1.200" /><circle cx="16.500" cy="16.500" r="1.500" fill="#fff" /></Svg>
);
const VolumeIcon = () => (
  <Svg w={24} h={19}><path d="M1 6H4L9.500 1V18L4 13H1ZM13 6.500Q15 9.500 13 12.500M16 4Q19.500 9.500 16 15M19.500 1Q25 9.500 19.500 18" stroke="#fff" strokeWidth="1.200" /></Svg>
);
const ActionIcon = () => (
  <Svg w={24} h={25}><path d="M0 0H24V19H16L11.500 24.500L7 19H0Z" fill="#fff" /><path d="M5 5.500H19M5 9.500H19M5 13.500H13" stroke="#000" strokeWidth="1.300" /></Svg>
);

/* ---------- composed parts ---------- */
const Group = ({ w, label, pad, children }: { w: number; label?: string; pad?: number; children: React.ReactNode }) => (
  <GroupBox $w={w}>
    <GroupBody $pad={pad}>{children}</GroupBody>
    {label && <GroupLabel>{label}</GroupLabel>}
  </GroupBox>
);
const BigItem = ({ icon, label, second, caret, boxed, w }: { icon: React.ReactNode; label: string; second?: string; caret?: boolean; boxed?: boolean; w?: number }) => (
  <Big $w={w}>
    <Slot $boxed={boxed}>{icon}</Slot>
    {label}
    {(second || caret) && <CaretLine>{second}{caret && <Caret />}</CaretLine>}
  </Big>
);
const SmallItem = ({ icon, label, caret, gap }: { icon: React.ReactNode; label: string; caret?: boolean; gap?: number }) => (
  <Small $gap={gap}><SmallSlot>{icon}</SmallSlot>{label}{caret && <Caret />}</Small>
);
const IconItem = ({ icon, name, caret, gap, muted }: { icon: React.ReactNode; name: string; caret?: boolean; gap?: number; muted?: boolean }) => (
  <Small $gap={gap} aria-label={name}><SmallSlot $center>{icon}</SmallSlot>{caret && <Caret color={muted ? "#c4c4c4" : undefined} />}</Small>
);

const tabs: [string, number][] = [
  ["File", 100], ["Home", 98], ["Insert", 87], ["Design", 99], ["Layout", 100], ["References", 128],
  ["Mailings", 111], ["Review", 100], ["View", 81], ["EndNote X6", 141],
];
const rulerText = (i: number) => (i % 8 === 0 && i !== 8 ? String(Math.abs(i / 8 - 1)) : "");
const hMarks = Array.from({ length: 68 }, (_, i) => i);
const vMarks = Array.from({ length: 80 }, (_, i) => i);

const quickLeft: [string, React.ReactNode][] = [["Save", <SaveIcon />], ["Undo", <UndoIcon />], ["Redo", <UndoIcon flip />]];
const quickFormat: [string, React.ReactNode][] = [["Superscript", <SuperIcon />], ["Font color", <FontColorIcon />], ["Center", <CenterIcon />]];
const quickStyle: [string, React.ReactNode][] = [["Font", <LetterIcon />], ["Paragraph", <ParaIcon />]];
const quickFile: [string, React.ReactNode][] = [
  ["New", <DocOutline />], ["Open", <FolderIcon />], ["Print", <PrintIcon />], ["Spelling", <SpellIcon />],
  ["Footnote", <FootnoteIcon />], ["Preview", <PreviewIcon />], ["Caption", <CaptionDocIcon />], ["More", <MoreIcon />],
];
const Quick = ({ items }: { items: [string, React.ReactNode][] }) => (
  <>{items.map(([n, icon]) => <QuickButton key={n} aria-label={n}>{icon}</QuickButton>)}</>
);

const Field = ({ text, plainColon }: { text: string; plainColon?: boolean }) => (
  <FieldLine><FieldText><b>{text}{!plainColon && ":"}</b>{plainColon && ":"}</FieldText><FieldBox /></FieldLine>
);

export default function App() {
  return (
    <Screen>
      <GlobalStyle />
      <Window>
        <TitleBar>
          <Quick items={quickLeft} />
          <TouchButton $w={67} aria-label="Touch mode"><TouchIcon /><Caret color="#fff" /></TouchButton>
          <QuickButton aria-label="Page setup"><FrameDocIcon /></QuickButton>
          <Bars $w={26}><Bar /><Bar /><Bar /></Bars>
          <Quick items={quickFormat} />
          <Bars $w={7}><Bar /></Bars>
          <Quick items={quickStyle} />
          <Bars $w={8}><Bar /></Bars>
          <Quick items={quickFile} />
          <TitleText>zhang san...</TitleText>
          <SignIn>Sign in</SignIn>
          <WindowControls>
            <ControlButton aria-label="Ribbon display options"><Svg w={20} h={16}><path d="M.7 .7H19.300V15.300H.7ZM1 4H19M10 13V6.500M6.500 10L10 6.500L13.500 10" stroke="#fff" strokeWidth="1.200" /></Svg></ControlButton>
            <ControlButton aria-label="Minimize"><Svg w={15} h={1}><path d="M0 .5H15" stroke="#fff" /></Svg></ControlButton>
            <ControlButton aria-label="Restore"><Svg w={15} h={15}><path d="M.6 3.600H11.400V14.400H.6ZM3.600 3.500V.6H14.400V11.400H11.500" stroke="#fff" strokeWidth="1.200" /></Svg></ControlButton>
            <ControlButton aria-label="Close"><Svg w={16} h={16}><path d="M.5 .5L15.500 15.500M15.500 .5L.5 15.500" stroke="#fff" strokeWidth="1.300" /></Svg></ControlButton>
          </WindowControls>
        </TitleBar>

        <TabBar>
          {tabs.map(([t, w]) => <Tab key={t} $w={w} $active={t === "Insert"}>{t}</Tab>)}
          <TellMe><BulbIcon /><TellInput aria-label="Tell me" placeholder="Tell me what you want to do" /></TellMe>
          <ShareButton><ShareIcon />Share</ShareButton>
          <NotesButton aria-label="Comments"><NoteIcon /></NotesButton>
        </TabBar>

        <Ribbon>
          <Group w={76}><BigItem boxed icon={<PagesIcon />} label="Pages" caret /></Group>
          <Group w={91} label="Tables"><BigItem icon={<TableIcon />} label="Table" caret /></Group>
          <Group w={528} label="Illustrations" pad={24}>
            <Columns $cols="181px 175px 1fr">
              <SmallItem icon={<PicturesIcon />} label="Pictures" />
              <SmallItem icon={<OnlinePicturesIcon />} label="Online Pictures" />
              <SmallItem icon={<ShapesIcon />} label="Shapes" caret />
              <SmallItem icon={<IconsIcon />} label="Icons" />
              <SmallItem icon={<CubeIcon />} label="3D Models" caret gap={14} />
              <SmallItem icon={<SmartArtIcon />} label="SmartArt" />
              <SmallItem icon={<ChartIcon />} label="Chart" />
              <SmallItem icon={<ScreenshotIcon />} label="Screenshot" caret />
            </Columns>
          </Group>
          <Group w={282} label="Add-ins" pad={24}>
            <AddinStack>
              <SmallItem icon={<StoreIcon />} label="Store" />
              <SmallItem icon={<AddinsIcon />} label="My Add-ins" caret gap={14} />
            </AddinStack>
            <BigItem w={90} icon={<WikiIcon />} label="Wikipedia" />
          </Group>
          <Group w={91} label="Media"><BigItem icon={<VideoIcon />} label="Online" second="Video" /></Group>
          <Group w={76}><BigItem boxed icon={<LinksIcon />} label="Links" caret /></Group>
          <Group w={103} label="Comments"><BigItem icon={<CommentIcon />} label="Comment" /></Group>
          <Group w={193} label="Header & Footer" pad={25}>
            <Columns $cols="1fr">
              <SmallItem icon={<HeaderIcon />} label="Header" caret />
              <SmallItem icon={<FooterIcon />} label="Footer" caret />
              <SmallItem icon={<NumberIcon />} label="Page Number" caret />
            </Columns>
          </Group>
          <Group w={228} label="Text">
            <BigItem w={90} icon={<TextBoxIcon />} label="Text" second="Box" caret />
            <GroupBody as="span" $pad={7}>
              <Columns $cols="56px 1fr">
                <IconItem name="Quick Parts" icon={<QuickPartsIcon />} caret />
                <IconItem name="WordArt" icon={<WordArtIcon />} caret />
                <IconItem name="Drop Cap" icon={<DropCapIcon />} caret muted />
                <IconItem name="Signature Line" icon={<SignatureIcon />} caret gap={13} />
                <IconItem name="Date and Time" icon={<DateIcon />} />
                <IconItem name="Object" icon={<ObjectIcon />} caret gap={13} />
              </Columns>
            </GroupBody>
          </Group>
          <Group w={77}><BigItem boxed icon={<OmegaIcon />} label="Symbols" caret /></Group>
          <Collapse aria-label="Collapse ribbon"><Svg w={14} h={9}><path d="M1 8L7 2L13 8" stroke="#777" strokeWidth="2.500" /></Svg></Collapse>
        </Ribbon>

        <Workspace>
          <TabSelector aria-label="Tab stop"><Svg w={9} h={9}><path d="M1.300 0V7.700H9" stroke="#666" strokeWidth="2.600" /></Svg></TabSelector>
          <RulerRow>
            <HRuler>
              <HMarks>
                {hMarks.map((i) => (
                  <HMark key={i}>{rulerText(i) || (i !== 8 && <HTick $long={i % 8 === 4} />)}</HMark>
                ))}
              </HMarks>
              <Indent $x={137} $y={-4} width="13" height="34" viewBox="0 0 13 34" fill="#fff" stroke="#888">
                <path d="M.5 .5H12.500V6L6.500 12L.5 6ZM6.500 16L12.500 22V27H.5V22ZM.5 27H12.500V33H.5Z" />
              </Indent>
              <Indent $x={1073} $y={12} width="13" height="13" viewBox="0 0 13 13" fill="#fff" stroke="#888">
                <path d="M6.500 1L12.500 7V12.500H.5V7Z" />
              </Indent>
            </HRuler>
          </RulerRow>
          <ScrollBar>
            <ScrollButton aria-label="Scroll up"><Svg w={11} h={6}><path d="M0 6L5.500 0L11 6Z" fill="#777" /></Svg></ScrollButton>
            <Thumb />
            <Spacer />
            <ScrollButton aria-label="Scroll down"><Svg w={11} h={6}><path d="M0 0L5.500 6L11 0Z" fill="#777" /></Svg></ScrollButton>
          </ScrollBar>
          <VRulerColumn>
            <VRuler>
              <VMarks>
                {vMarks.map((i) => (
                  <VMark key={i}>{rulerText(i) || (i !== 8 && <VTick $long={i % 8 === 4} />)}</VMark>
                ))}
              </VMarks>
            </VRuler>
          </VRulerColumn>
          <Canvas>
            <Paper>
              <DocTable>
                <tbody>
                  <tr>
                    <DocCell>
                      <Field text="Electronic Signature" plainColon />
                      <Field text="Email for exam" />
                      <Field text="Date" plainColon />
                    </DocCell>
                    <DocCell>
                      <Field text="Signature électronique" plainColon />
                      <Field text="Courriel pour l’examen" />
                      <Field text="Date" plainColon />
                    </DocCell>
                  </tr>
                </tbody>
              </DocTable>
            </Paper>
          </Canvas>
        </Workspace>

        <StatusBar>
          <StatusButton>Page 1 of 1</StatusButton>
          <StatusButton $ml={69} aria-label="Proofing"><ProofIcon /></StatusButton>
          <StatusButton $ml={32}>French (Canada)</StatusButton>
          <StatusButton $ml={40} aria-label="Macros"><MacroIcon /></StatusButton>
          <ViewGroup>
            <ViewButton aria-label="Read mode"><ReadIcon /></ViewButton>
            <ViewButton $on aria-label="Print layout"><PrintLayoutIcon /></ViewButton>
            <ViewButton aria-label="Web layout"><WebIcon /></ViewButton>
          </ViewGroup>
        </StatusBar>
      </Window>

      <Sidebar>
        <SideButton $h={60} aria-label="Start"><WindowsIcon /></SideButton>
        <SideButton $h={108} aria-label="Back"><BackIcon /></SideButton>
        <SideButton $h={60} aria-label="Cortana"><CircleIcon /></SideButton>
        <SideButton as="span" $h={35} />
        <Task aria-label="Chrome"><ChromeIcon /></Task>
        <Task $active aria-label="Word"><WordIcon /></Task>
        <Task aria-label="File Explorer"><ExplorerIcon /></Task>
        <Spacer />
        <SideButton $h={60} aria-label="Battery"><BatteryIcon /></SideButton>
        <SideButton $h={60} aria-label="Network"><WifiIcon /></SideButton>
        <SideButton $h={60} aria-label="Volume"><VolumeIcon /></SideButton>
        <Clock><span>12:02 PM</span><span>10/15/2018</span></Clock>
        <SideButton $h={52} aria-label="Notifications"><ActionIcon /></SideButton>
      </Sidebar>

      <LanguageBar>
        <Grip />
        <LangButton $h={28}>CH</LangButton>
        <LangButton $h={36} aria-label="Proofing tools"><CheckDocIcon /></LangButton>
        <LangButton $h={28} aria-label="Sogou"><SogouIcon size={25} /></LangButton>
        <LangButton $h={36} aria-label="Help"><HelpIcon /></LangButton>
        <LangButton $h={26} aria-label="Options"><Svg w={24} h={9}><path d="M0 1H8L4 5ZM15 6H23V9H15Z" fill="#000" /></Svg></LangButton>
      </LanguageBar>
      <ImeBar>
        <ImeLogo><SogouIcon size={44} /></ImeLogo>
        <ImeButton>英</ImeButton>
        <ImeButton aria-label="Half width"><MoonIcon /></ImeButton>
        <ImeButton aria-label="Punctuation"><PunctIcon /></ImeButton>
        <ImeButton aria-label="Soft keyboard"><KeyboardIcon /></ImeButton>
        <ImeButton aria-label="Account"><PersonIcon /></ImeButton>
        <ImeButton aria-label="Skins"><ShirtIcon /></ImeButton>
        <ImeButton aria-label="Tools"><WrenchIcon /></ImeButton>
      </ImeBar>
    </Screen>
  );
}
